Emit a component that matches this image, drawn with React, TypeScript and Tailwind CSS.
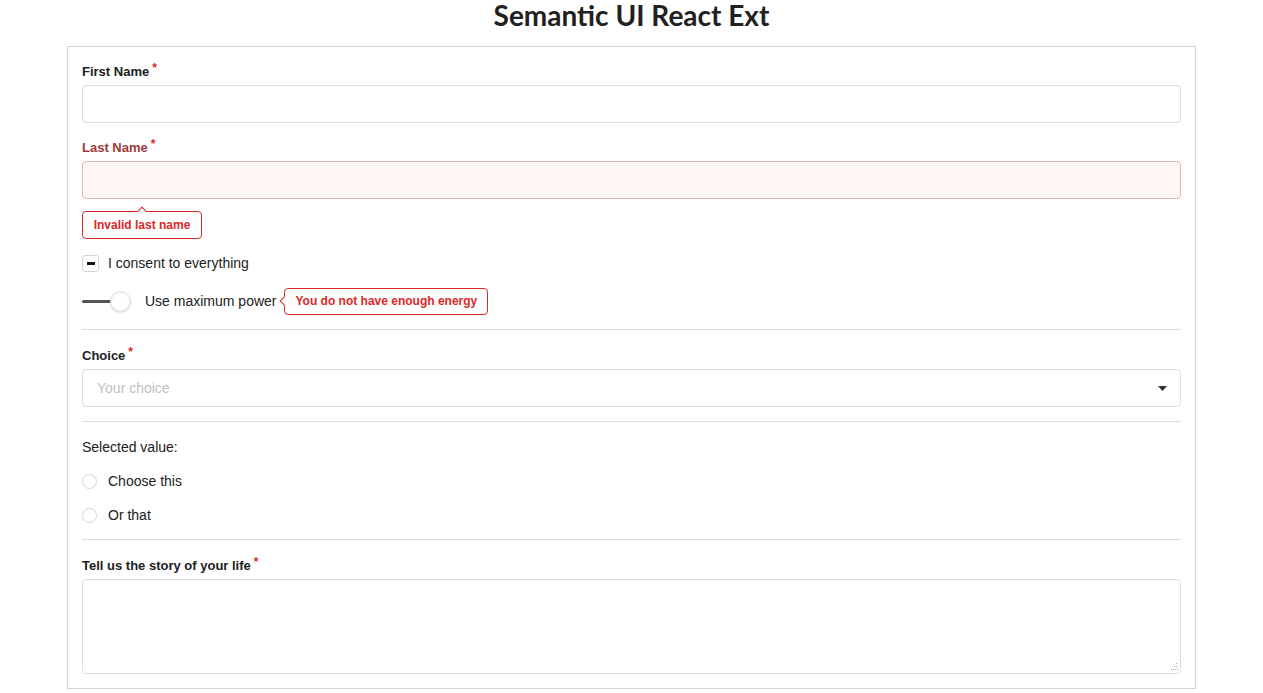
import React from 'react';

const sans = "font-['Liberation_Sans',Arial,sans-serif]";

function Label({ text, error = false }: { text: string; error?: boolean }) {
  return (
    <div className={`flex h-[20px] items-center pt-[2px] text-[13px] font-bold ${error ? 'text-[#9f3a38]' : 'text-[#212121]'}`}>
      <span>{text}</span>
      <span className="ml-[3px] -mt-[8px] text-[12px] font-bold text-[#db2828]">*</span>
    </div>
  );
}

function Divider() {
  return <div className="h-px w-full bg-[#dedede]" />;
}

function Radio({ label }: { label: string }) {
  return (
    <div className="flex h-[17px] items-center">
      <span className="h-[15px] w-[15px] rounded-full border border-[#d4d4d5] bg-white" />
      <span className="ml-[11px] text-[14px] text-[#212121]">{label}</span>
    </div>
  );
}

export default function App() {
  return (
    <div className={`min-h-[693px] bg-white ${sans}`}>
      <h1 className="h-[46px] text-center font-['Lato',sans-serif] text-[28px] font-bold leading-[30px] text-[#212121]">
        Semantic UI React Ext
      </h1>

      <div className="mx-auto w-[1129px] border border-[#d4d4d5] bg-white p-[14px]">
        {/* First name */}
        <Label text="First Name" />
        <div className="mt-[4px] h-[38px] rounded-[4px] border border-[#dededf] bg-white" />

        {/* Last name (error) */}
        <div className="mt-[14px]">
          <Label text="Last Name" error />
          <div className="mt-[4px] h-[38px] rounded-[4px] border border-[#e0b4b4] bg-[#fff6f6]" />
        </div>
        <div className="relative mt-[12px] flex h-[28px] w-[120px] items-center justify-center rounded-[4px] border border-[#db2828] bg-white text-[12px] font-bold text-[#db2828]">
          <span className="absolute left-1/2 top-[-4px] h-[7px] w-[7px] -translate-x-1/2 rotate-45 border-l border-t border-[#db2828] bg-white" />
          <span className="relative">Invalid last name</span>
        </div>

        {/* Consent checkbox */}
        <div className="mt-[16px] flex h-[17px] items-center">
          <span className="flex h-[17px] w-[17px] items-center justify-center rounded-[3px] border border-[#d4d4d5] bg-white">
            <span className="h-[3px] w-[8px] bg-[#111]" />
          </span>
          <span className="ml-[9px] text-[14px] text-[#212121]">I consent to everything</span>
        </div>

        {/* Slider toggle */}
        <div className="mt-[16px] flex h-[26px] items-center">
          <div className="relative h-[21px] w-[49px]">
            <span className="absolute left-0 top-[9px] h-[3px] w-[49px] rounded-full bg-[#545454]" />
            <span className="absolute left-[28px] top-0 h-[21px] w-[21px] rounded-full border border-[#e4e4e4] bg-white shadow-[0_1px_2px_0_rgba(34,36,38,0.15),0_0_0_1px_rgba(34,36,38,0.08)_inset]" />
          </div>
          <span className="ml-[14px] text-[14px] text-[#212121]">Use maximum power</span>
          <div className="relative ml-[8px] flex h-[27px] items-center rounded-[4px] border border-[#db2828] bg-white px-[10px] text-[12px] font-bold text-[#db2828]">
            <span className="absolute left-[-4px] top-1/2 h-[7px] w-[7px] -translate-y-1/2 rotate-45 border-b border-l border-[#db2828] bg-white" />
            <span className="relative">You do not have enough energy</span>
          </div>
        </div>

        <div className="mt-[15px]">
          <Divider />
        </div>

        {/* Choice dropdown */}
        <div className="mt-[15px]">
          <Label text="Choice" />
          <div className="mt-[4px] flex h-[38px] items-center justify-between rounded-[4px] border border-[#dededf] bg-white pl-[14px] pr-[13px]">
            <span className="text-[14px] text-[#bfbfbf]">Your choice</span>
            <svg width="9" height="5" viewBox="0 0 9 5">
              <path d="M0 0h9L4.5 5z" fill="#333" />
            </svg>
          </div>
        </div>

        <div className="mt-[14px]">
          <Divider />
        </div>

        {/* Radios */}
        <div className="mt-[15px] flex h-[20px] items-center text-[14px] text-[#212121]">Selected value:</div>
        <div className="mt-[16px]">
          <Radio label="Choose this" />
        </div>
        <div className="mt-[17px]">
          <Radio label="Or that" />
        </div>

        <div className="mt-[15px]">
          <Divider />
        </div>

        {/* Story textarea */}
        <div className="mt-[15px]">
          <Label text="Tell us the story of your life" />
          <div className="relative mt-[4px] h-[95px] rounded-[4px] border border-[#dededf] bg-white">
            <svg className="absolute bottom-[2px] right-[2px]" width="8" height="8" viewBox="0 0 8 8">
              <g fill="#a8a8a8">
                <rect x="6" y="0" width="1" height="1" />
                <rect x="4" y="3" width="1" height="1" />
                <rect x="6" y="3" width="1" height="1" />
                <rect x="1" y="6" width="1" height="1" />
                <rect x="3" y="6" width="1" height="1" />
                <rect x="5" y="6" width="1" height="1" />
                <rect x="7" y="6" width="1" height="1" />
              </g>
            </svg>
          </div>
        </div>
      </div>
    </div>
  );
}
